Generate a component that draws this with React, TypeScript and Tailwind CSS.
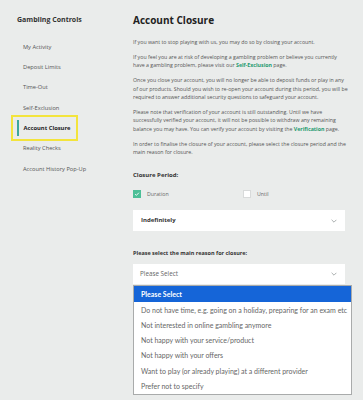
import React from 'react';

const navItems = [
  'My Activity',
  'Deposit Limits',
  'Time-Out',
  'Self-Exclusion',
  'Account Closure',
  'Reality Checks',
  'Account History Pop-Up',
];

const reasons = [
  'Do not have time, e.g. going on a holiday, preparing for an exam etc',
  'Not interested in online gambling anymore',
  'Not happy with your service/product',
  'Not happy with your offers',
  'Want to play (or already playing) at a different provider',
  'Prefer not to specify',
];

const Chevron = () => (
  <svg viewBox="0 0 10 6" className="w-[6px] h-[4px]" fill="none" stroke="#9aa0a0" strokeWidth="1.4">
    <path d="M1 1l4 4 4-4" />
  </svg>
);

export default function App() {
  return (
    <div className="flex min-h-[400px] bg-[#eaeceb] font-['Open_Sans',sans-serif] text-[#555]">
      {/* Sidebar */}
      <aside className="w-[133px] shrink-0 pt-[15px]">
        <h2 className="pl-[17px] text-[7px] font-bold leading-[10px] text-[#333]">Gambling Controls</h2>
        <ul className="mt-[12px] flex flex-col">
          {navItems.map((item) => {
            const active = item === 'Account Closure';
            return (
              <li key={item} className="h-[20.3px] flex items-center pl-[11px]">
                {active ? (
                  <div className="flex items-center h-[26px] w-[67px] border-2 border-[#f3e43c] pl-[4px]">
                    <span className="w-[1.5px] h-[16px] bg-[#3ea79c]" />
                    <span className="ml-[5px] text-[5.8px] font-bold text-[#222]">{item}</span>
                  </div>
                ) : (
                  <span className="pl-[12px] text-[5.7px] text-[#555]">{item}</span>
                )}
              </li>
            );
          })}
        </ul>
      </aside>

      {/* Main */}
      <main className="w-[216px] pt-[13px] text-[5.25px] leading-[8.5px]">
        <h1 className="text-[10px] font-bold leading-[14px] text-[#222]">Account Closure</h1>

        <div className="mt-[11px] flex flex-col gap-[6.3px]">
          <p>If you want to stop playing with us, you may do so by closing your account.</p>
          <p>
            If you feel you are at risk of developing a gambling problem or believe you currently have a gambling
            problem, please visit our <span className="font-bold text-[#1f9a6f]">Self-Exclusion</span> page.
          </p>
          <p>
            Once you close your account, you will no longer be able to deposit funds or play in any of our products.
            Should you wish to re-open your account during this period, you will be required to answer additional
            security questions to safeguard your account.
          </p>
          <p>
            Please note that verification of your account is still outstanding. Until we have successfully verified
            your account, it will not be possible to withdraw any remaining balance you may have. You can verify your
            account by visiting the <span className="font-bold text-[#1f9a6f]">Verification</span> page.
          </p>
          <p>
            In order to finalise the closure of your account, please select the closure period and the main reason
            for closure.
          </p>
        </div>

        <h3 className="mt-[14px] text-[6px] font-bold leading-[8px] text-[#333]">Closure Period:</h3>

        <div className="mt-[11px] flex items-center">
          <div className="flex w-[110px] items-center">
            <span className="flex h-[8px] w-[8px] items-center justify-center bg-[#4cbf97]">
              <svg viewBox="0 0 8 8" className="h-[6px] w-[6px]" fill="none" stroke="#fff" strokeWidth="1.2">
                <path d="M1.5 4.2l1.7 1.6L6.5 2.3" />
              </svg>
            </span>
            <span className="ml-[6px] text-[5.25px] text-[#666]">Duration</span>
          </div>
          <div className="flex items-center">
            <span className="h-[8px] w-[8px] border border-[#d8dada] bg-white" />
            <span className="ml-[6px] text-[5.25px] text-[#666]">Until</span>
          </div>
        </div>

        <div className="mt-[12px] flex h-[21px] w-[212px] items-center justify-between bg-white pl-[8px] pr-[8px]">
          <span className="text-[6px] font-bold text-[#333]">Indefinitely</span>
          <Chevron />
        </div>

        <h3 className="mt-[18px] text-[5.5px] font-bold leading-[8px] text-[#333]">
          Please select the main reason for closure:
        </h3>

        <div className="relative mt-[7px] w-[212px]">
          <div className="flex h-[20px] items-center justify-between bg-white pl-[7px] pr-[8px]">
            <span className="text-[6.3px] text-[#666]">Please Select</span>
            <Chevron />
          </div>
          <ul className="absolute left-0 top-[21px] w-[219px] border border-[#a9abab] bg-white font-['Lato',sans-serif] text-[7px] text-[#666]">
            <li className="flex h-[16px] items-center bg-[#1565d8] pl-[7px] font-bold text-white">Please Select</li>
            {reasons.map((r) => (
              <li key={r} className="flex h-[15.3px] items-center whitespace-nowrap overflow-hidden pl-[7px]">
                {r}
              </li>
            ))}
          </ul>
        </div>
      </main>
    </div>
  );
}
